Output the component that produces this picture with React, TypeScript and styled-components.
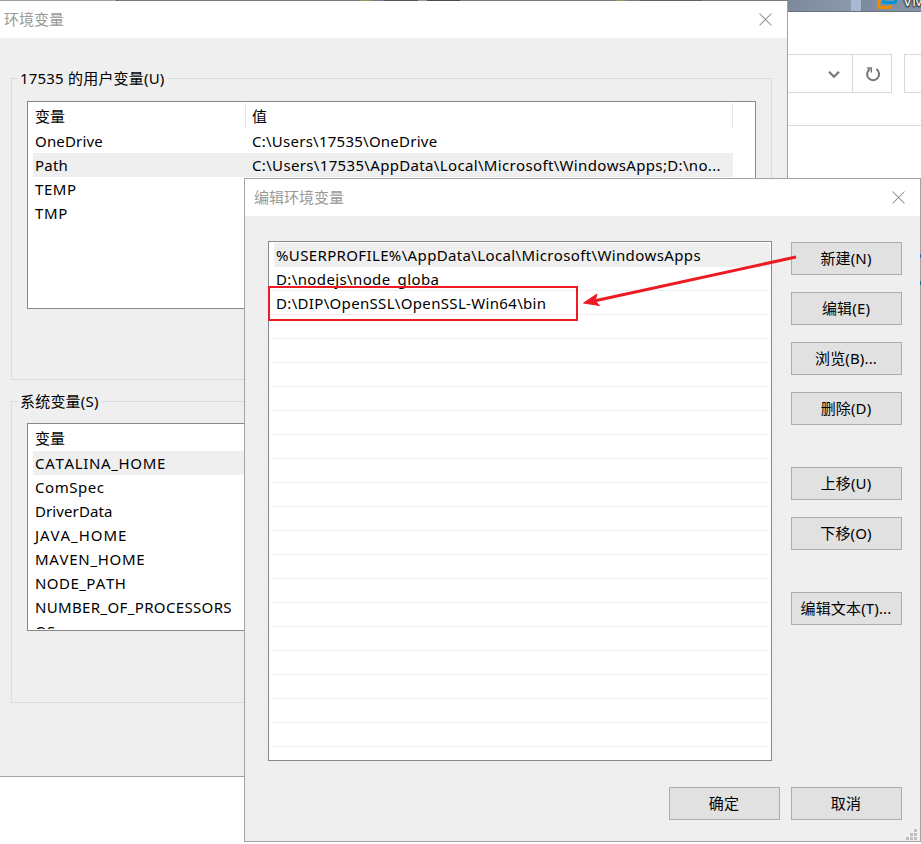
import React from "react";
import styled, { createGlobalStyle } from "styled-components";

const GlobalStyle = createGlobalStyle`
  * { box-sizing: border-box; }
  html, body { margin: 0; padding: 0; overflow: hidden; background: #fff; }
  body {
    font-family: "Noto Sans", "Noto Sans CJK SC", sans-serif;
    font-size: 15px;
    font-kerning: none;
    color: #000;
  }
`;

const Desktop = styled.div`
  position: relative;
  width: 921px;
  height: 844px;
  overflow: hidden;
  background: #fff;
`;

const Explorer = styled.div`
  display: flex;
  flex-direction: column;
  width: 921px;
`;

const Taskbar = styled.div`
  display: flex;
  height: 12px;
  padding-left: 877px;
  gap: 6px;
  overflow: hidden;
  border-bottom: 1px solid #687280;
  background:
    linear-gradient(90deg, transparent 360px, #9c8f66 360px 371px, transparent 371px 384px,
      #55535a 384px 418px, #9a999e 418px 427px, #4b494e 427px 460px, transparent 460px 615px,
      #9c8f66 615px 626px, transparent 626px 640px, #605e65 640px 702px, transparent 702px),
    linear-gradient(90deg, #a0a0a0 0 116px, #55575e 116px 118px, #777b86 118px 788px,
      #7e8a9b 788px, #8b98aa 851px, #a9b9d2 851px 861px, #7e8b9d 861px, #8795a8 921px);
  svg { flex: none; display: block; }
`;

const TaskLabel = styled.span`
  flex: none;
  font-size: 15px;
  line-height: 18px;
  margin-top: -9px;
  color: #fff;
  text-shadow: 0 1px 2px #000, 0 0 2px #000;
`;

const AddressRow = styled.div`
  display: flex;
  align-items: flex-start;
  height: 114px;
  padding: 42px 0 0 700px;
  border-bottom: 1px solid #d9d9d9;
`;

const AddressCell = styled.div<{ $w: number; $gap?: number; $end?: number }>`
  display: flex;
  flex: none;
  align-items: center;
  justify-content: flex-end;
  width: ${(p) => p.$w}px;
  height: 39px;
  margin-left: ${(p) => p.$gap ?? 0}px;
  padding-right: ${(p) => p.$end ?? 0}px;
  border: 1px solid #d9d9d9;
`;

const Window = styled.section<{ $x: number; $y: number; $w: number; $h: number }>`
  position: absolute;
  left: ${(p) => p.$x}px;
  top: ${(p) => p.$y}px;
  width: ${(p) => p.$w}px;
  height: ${(p) => p.$h}px;
  display: flex;
  flex-direction: column;
  background: #efefef;
  border: 1px solid #a3a3a3;
`;

const MainWindow = styled(Window)`
  border-top: 0;
  border-left: 0;
`;

const TitleBar = styled.header<{ $left: number }>`
  display: flex;
  flex: none;
  align-items: center;
  justify-content: space-between;
  height: 37px;
  padding: 0 15px 1px ${(p) => p.$left}px;
  background: #fff;
  color: #999;
  line-height: 20px;
`;

const Groups = styled.div`
  display: flex;
  flex-direction: column;
  gap: 11px;
  padding: 30px 15px 0 11px;
`;

const Group = styled.fieldset`
  min-width: 0;
  height: 312px;
  margin: 0;
  padding: 0 15px;
  border: 1px solid #dcdcdc;
`;

const Legend = styled.legend<{ $w: number }>`
  width: ${(p) => p.$w}px;
  height: 20px;
  margin-left: -9px;
  padding-left: 2px;
  line-height: 20px;
  white-space: nowrap;
  letter-spacing: 0.2px;
`;

const ListBox = styled.div<{ $top: number }>`
  height: 208px;
  margin-top: ${(p) => p.$top}px;
  padding: 1px 1px 1px 5px;
  border: 1px solid #828790;
  background: #fff;
`;

const Rows = styled.div`
  height: 204px;
  overflow: hidden;
`;

const HeaderRow = styled.div`
  display: grid;
  grid-template-columns: 213px 487px;
  height: 26px;
  span {
    height: 25px;
    padding-left: 2px;
    line-height: 27px;
    border-right: 1px solid #e5e5e5;
  }
  span + span { padding-left: 6px; }
`;

const Row = styled.div<{ $selected?: boolean }>`
  display: grid;
  grid-template-columns: 217px 483px;
  width: 700px;
  height: 24px;
  padding-left: 2px;
  line-height: 24px;
  white-space: nowrap;
  background: ${(p) => (p.$selected ? "#efefef" : "transparent")};
`;

const Label = styled.span<{ $track?: number }>`
  letter-spacing: ${(p) => p.$track ?? 0}px;
  white-space: nowrap;
`;

const DialogBody = styled.div`
  display: flex;
  gap: 19px;
  padding: 25px 0 0 23px;
`;

const PathList = styled.div`
  width: 504px;
  height: 520px;
  padding: 1px;
  overflow: hidden;
  border: 1px solid #828790;
  background: #fff;
`;

const PathRow = styled.div<{ $selected?: boolean }>`
  height: 24px;
  padding-left: 4px;
  border-bottom: ${(p) => (p.$selected ? "0" : "1px solid #efefef")};
  line-height: 24px;
  span {
    display: block;
    height: 24px;
    padding-left: 2px;
    background: ${(p) => (p.$selected ? "#efefef" : "transparent")};
  }
`;

const Actions = styled.div`
  display: flex;
  flex-direction: column;
  gap: 17px;
  padding-top: 1px;
`;

const Button = styled.button<{ $gapAbove?: number }>`
  width: 111px;
  height: 33px;
  margin: ${(p) => p.$gapAbove ?? 0}px 0 0;
  padding: 0 1px 0 0;
  border: 1px solid #adadad;
  border-radius: 0;
  background: #e1e1e1;
  color: #000;
  font: inherit;
  font-kerning: none;
  letter-spacing: 0.15px;
  line-height: 31px;
  white-space: nowrap;
`;

const Footer = styled.footer`
  display: flex;
  justify-content: flex-end;
  gap: 11px;
  padding: 26px 18px 0 0;
`;

const Grip = styled.svg`
  position: absolute;
  right: 3px;
  bottom: 1px;
`;

const Highlight = styled.div`
  position: absolute;
  left: 268px;
  top: 286px;
  width: 310px;
  height: 35px;
  border: 2px solid #ed1c24;
`;

const Arrow = styled.svg`
  position: absolute;
  left: 580px;
  top: 250px;
`;

const EdgeMark = styled.i<{ $y: number }>`
  position: absolute;
  left: 920px;
  top: ${(p) => p.$y}px;
  width: 1px;
  height: 4px;
  background: #286a9c;
`;

const CloseIcon = () => (
  <svg width="13" height="13" viewBox="0 0 13 13" fill="none" stroke="#8b8b8b" strokeWidth="1.05">
    <path d="M.5.5l12 12M12.5.5l-12 12" />
  </svg>
);

const userVars = [
  { name: "OneDrive", track: 0.17, value: "C:\\Users\\17535\\OneDrive", valueTrack: 0.25 },
  {
    name: "Path",
    track: 0.2,
    value: "C:\\Users\\17535\\AppData\\Local\\Microsoft\\WindowsApps;D:\\no...",
    valueTrack: 0.34,
  },
  { name: "TEMP", track: 0.55, value: "", valueTrack: 0 },
  { name: "TMP", track: 0.7, value: "", valueTrack: 0 },
];

const systemVars = [
  { name: "CATALINA_HOME", track: 0.66 },
  { name: "ComSpec", track: 0.55 },
  { name: "DriverData", track: 0.1 },
  { name: "JAVA_HOME", track: 0.95 },
  { name: "MAVEN_HOME", track: 0.7 },
  { name: "NODE_PATH", track: 0.45 },
  { name: "NUMBER_OF_PROCESSORS", track: 0.35 },
  { name: "OS", track: 0.35 },
];

const paths = [
  { text: "%USERPROFILE%\\AppData\\Local\\Microsoft\\WindowsApps", track: 0.36 },
  { text: "D:\\nodejs\\node_globa", track: 0.38 },
  { text: "D:\\DIP\\OpenSSL\\OpenSSL-Win64\\bin", track: 0.33 },
];

const actions = [
  { text: "新建(N)" }, { text: "编辑(E)" }, { text: "浏览(B)..." }, { text: "删除(D)" },
  { text: "上移(U)", gap: 25 }, { text: "下移(O)" }, { text: "编辑文本(T)...", gap: 25 },
];

export default function App() {
  return (
    <>
      <GlobalStyle />
      <Desktop>
        <Explorer>
          <Taskbar>
            <svg width="20" height="11" viewBox="0 0 20 11" fill="none" strokeWidth="3">
              <path d="M5 -.5H1.700V6.500q0 1 1 1H12.500q1 0 1-1V5" stroke="#f08a00" />
              <path d="M6.500 -2V1.500q0 1 1 1H17.500q1 0 1-1V-2" stroke="#0795d3" />
            </svg>
            <TaskLabel>VM</TaskLabel>
          </Taskbar>
          <AddressRow>
            <AddressCell $w={153} $end={12}>
              <svg width="12" height="8" viewBox="0 0 12 8" fill="none" stroke="#777" strokeWidth="2.2">
                <path d="M1 1.7l5 5 5-5" />
              </svg>
            </AddressCell>
            <AddressCell $w={40} $gap={-1} $end={10}>
              <svg width="16" height="16" viewBox="0 0 16 16" fill="none" stroke="#777" strokeWidth="2.1">
                <path d="M4.800 3.200A6 6 0 1 0 11.400 3.200" />
                <path d="M2 2h4.300v4.500" strokeWidth="1.5" />
              </svg>
            </AddressCell>
            <AddressCell $w={40} $gap={12} />
          </AddressRow>
        </Explorer>

        <MainWindow $x={0} $y={1} $w={788} $h={776}>
          <TitleBar $left={4}>
            <Label>环境变量</Label>
            <CloseIcon />
          </TitleBar>
          <Groups>
            <Group>
              <Legend $w={149}>17535 的用户变量(U)</Legend>
              <ListBox $top={13}>
                <Rows>
                  <HeaderRow><span>变量</span><span>值</span></HeaderRow>
                  {userVars.map((v) => (
                    <Row key={v.name} $selected={v.name === "Path"}>
                      <Label $track={v.track}>{v.name}</Label>
                      <Label $track={v.valueTrack}>{v.value}</Label>
                    </Row>
                  ))}
                </Rows>
              </ListBox>
            </Group>
            <Group>
              <Legend $w={83}>系统变量(S)</Legend>
              <ListBox $top={12}>
                <Rows>
                  <HeaderRow><span>变量</span><span>值</span></HeaderRow>
                  {systemVars.map((v) => (
                    <Row key={v.name} $selected={v.name === "CATALINA_HOME"}>
                      <Label $track={v.track}>{v.name}</Label>
                    </Row>
                  ))}
                </Rows>
              </ListBox>
            </Group>
          </Groups>
        </MainWindow>

        <Window $x={244} $y={178} $w={677} $h={664}>
          <TitleBar $left={9}>
            <Label>编辑环境变量</Label>
            <CloseIcon />
          </TitleBar>
          <DialogBody>
            <PathList>
              {Array.from({ length: 21 }, (_, i) => (
                <PathRow key={i} $selected={i === 0}>
                  <Label $track={paths[i]?.track}>{paths[i]?.text ?? ""}</Label>
                </PathRow>
              ))}
            </PathList>
            <Actions>
              {actions.map((a) => (
                <Button key={a.text} $gapAbove={a.gap}>{a.text}</Button>
              ))}
            </Actions>
          </DialogBody>
          <Footer>
            <Button>确定</Button>
            <Button>取消</Button>
          </Footer>
          <Grip width="11" height="11" fill="#bfbfbf">
            <path d="M8 0h3v3h-3zM4 4h3v3h-3zM8 4h3v3h-3zM0 8h3v3h-3zM4 8h3v3h-3zM8 8h3v3h-3z" />
          </Grip>
        </Window>

        <EdgeMark $y={254} />
        <EdgeMark $y={281} />
        <Highlight />
        <Arrow width="220" height="60" viewBox="580 250 220 60">
          <path d="M796 257L594 301" stroke="#ed1c24" strokeWidth="3" />
          <path d="M583.500 303L597 294L595 300.800L599.500 305.500Z" fill="#ed1c24" stroke="#ed1c24" />
        </Arrow>
      </Desktop>
    </>
  );
}
